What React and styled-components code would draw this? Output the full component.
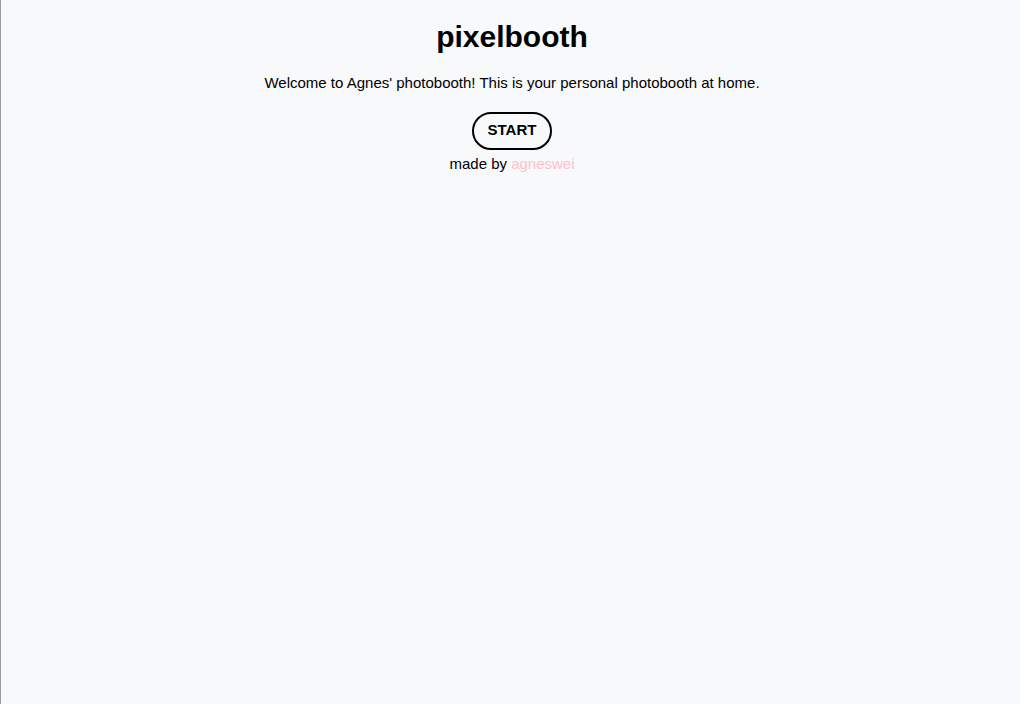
import React from 'react';
import styled, { createGlobalStyle } from 'styled-components';

const GlobalStyle = createGlobalStyle`
  html, body {
    margin: 0;
    padding: 0;
    background: #f8f9fa;
  }
  body {
    font-family: "Liberation Sans", Arial, sans-serif;
    color: #000;
  }
`;

const Page = styled.div`
  min-height: 100vh;
  box-sizing: border-box;
  border-left: 1px solid #9a9a9a;
  background: #f8f9fa;
  padding: 19px 0 0 3px;
  display: flex;
  flex-direction: column;
  align-items: center;
`;

const Title = styled.h1`
  margin: 0;
  font-size: 30px;
  line-height: 36px;
  font-weight: 700;
`;

const Intro = styled.p`
  margin: 16px 0 0;
  font-size: 15px;
  line-height: 24px;
`;

const StartButton = styled.button`
  margin-top: 17px;
  width: 80px;
  height: 38px;
  padding: 0 0 3px;
  border: 2px solid #000;
  border-radius: 20px;
  background: transparent;
  font-family: inherit;
  font-size: 15px;
  font-weight: 700;
  color: #000;
  cursor: pointer;
`;

const Credit = styled.p`
  margin: 2px 0 0;
  font-size: 15px;
  line-height: 24px;
`;

const CreditLink = styled.a`
  color: #ffc0cb;
  text-decoration: none;
`;

const App = () => (
  <>
    <GlobalStyle />
    <Page>
      <Title>pixelbooth</Title>
      <Intro>Welcome to Agnes&apos; photobooth! This is your personal photobooth at home.</Intro>
      <StartButton type="button">START</StartButton>
      <Credit>
        made by <CreditLink href="#">agneswei</CreditLink>
      </Credit>
    </Page>
  </>
);

export default App;
